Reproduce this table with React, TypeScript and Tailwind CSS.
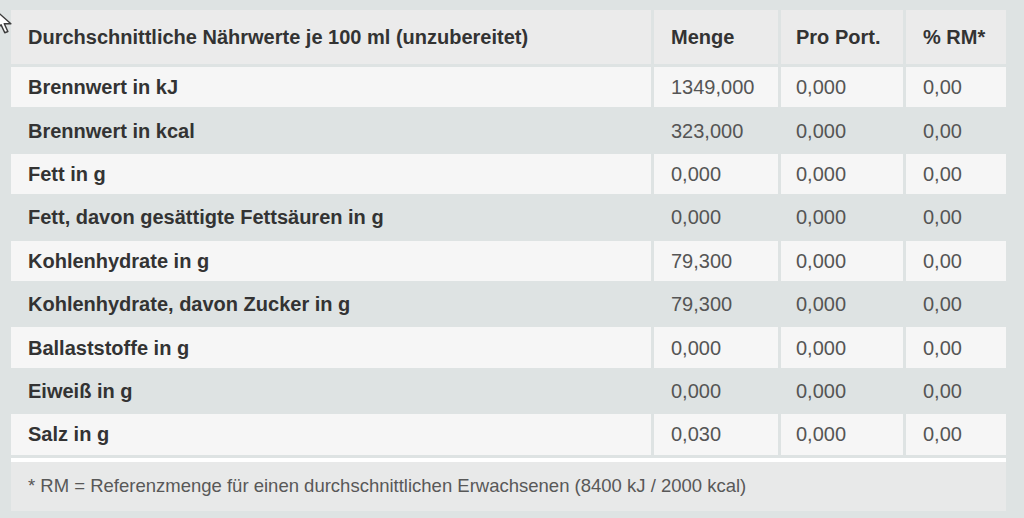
const rows: [string, string][] = [
  ['Brennwert in kJ', '1349,000'],
  ['Brennwert in kcal', '323,000'],
  ['Fett in g', '0,000'],
  ['Fett, davon gesättigte Fettsäuren in g', '0,000'],
  ['Kohlenhydrate in g', '79,300'],
  ['Kohlenhydrate, davon Zucker in g', '79,300'],
  ['Ballaststoffe in g', '0,000'],
  ['Eiweiß in g', '0,000'],
  ['Salz in g', '0,030'],
]

function Cursor() {
  return (
    <svg className="absolute left-[-5px] top-[9px] z-10" width="22" height="28" viewBox="0 0 18 22">
      <path d="M1 1 L1 16 L5 12.5 L8 19 L10.5 18 L7.6 11.6 L13 11.6 Z" fill="#fff" stroke="#3c3c3c" strokeWidth="1.2" strokeLinejoin="round" />
    </svg>
  )
}

export default function App() {
  return (
    <div className="relative h-[518px] w-[1024px] overflow-hidden bg-[#dee3e3] pl-[8px] pt-[7px] font-['Liberation_Sans',Arial,sans-serif]">
      <Cursor />
      <table className="w-[1000px] table-fixed border-separate border-spacing-[3px] text-[20px]">
        <thead>
          <tr>
            <th className="h-[54px] w-[640px] bg-[#ebebeb] pl-[17px] text-left font-bold text-[#333]">Durchschnittliche Nährwerte je 100 ml (unzubereitet)</th>
            <th className="w-[124px] bg-[#ebebeb] pl-[17px] text-left font-bold text-[#333]">Menge</th>
            <th className="w-[122px] bg-[#ebebeb] pl-[15px] text-left font-bold text-[#333]">Pro Port.</th>
            <th className="w-[100px] bg-[#ebebeb] pl-[17px] text-left font-bold text-[#333]">% RM*</th>
          </tr>
        </thead>
        <tbody>
          {rows.map(([name, value], i) => {
            const bg = i % 2 === 0 ? 'bg-[#f6f6f6]' : 'bg-[#dee3e3]'
            return (
              <tr key={name}>
                <td className={`h-[40.4px] pl-[17px] font-bold text-[#333] ${bg}`}>{name}</td>
                <td className={`pl-[17px] text-[#555] ${bg}`}>{value}</td>
                <td className={`pl-[15px] text-[#555] ${bg}`}>0,000</td>
                <td className={`pl-[17px] text-[#555] ${bg}`}>0,00</td>
              </tr>
            )
          })}
        </tbody>
        <tfoot>
          <tr>
            <td colSpan={4} className="h-[53px] border-t-[4px] border-white bg-[#e8e9e9] pl-[17px] text-[18.5px] text-[#585858]">
              * RM = Referenzmenge für einen durchschnittlichen Erwachsenen (8400 kJ / 2000 kcal)
            </td>
          </tr>
        </tfoot>
      </table>
    </div>
  )
}
